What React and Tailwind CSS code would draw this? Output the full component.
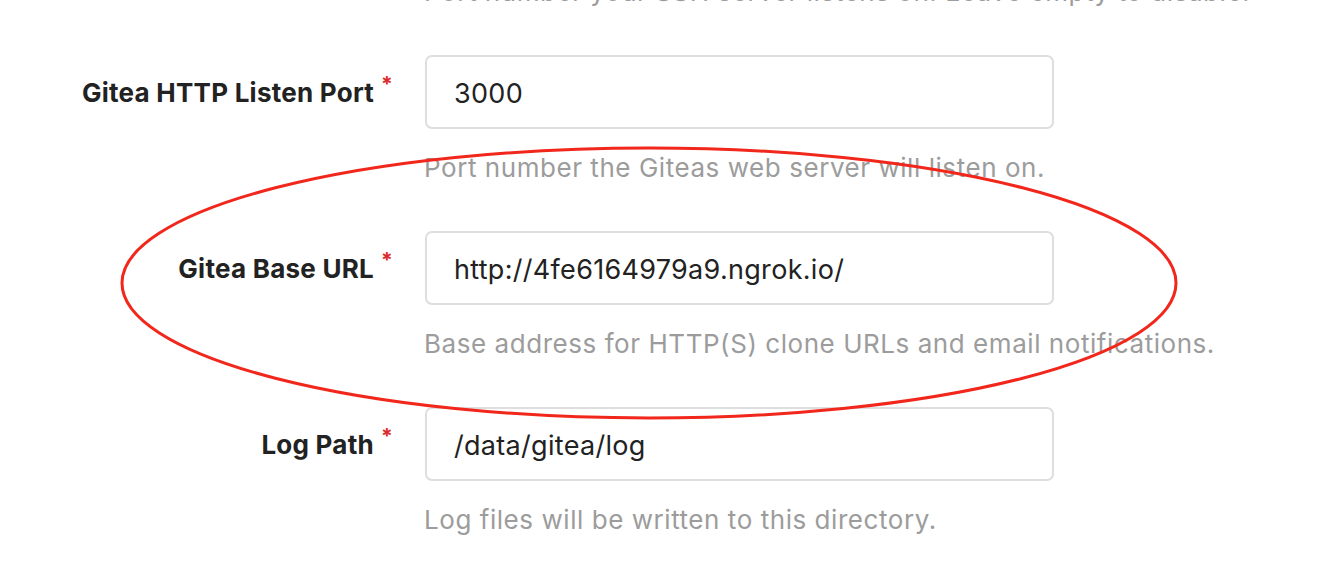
import React from 'react';

const fields = [
  {
    label: 'Gitea HTTP Listen Port',
    value: '3000',
    help: 'Port number the Giteas web server will listen on.',
  },
  {
    label: 'Gitea Base URL',
    value: 'http://4fe6164979a9.ngrok.io/',
    help: 'Base address for HTTP(S) clone URLs and email notifications.',
  },
  {
    label: 'Log Path',
    value: '/data/gitea/log',
    help: 'Log files will be written to this directory.',
  },
];

const Field = ({ label, value, help }) => (
  <div className="mb-[48px]">
    <div className="flex items-center h-[74px]">
      <label className="w-[393px] text-right text-[26px] tracking-[0.25px] font-bold text-[#222222]">
        {label}
        <span className="relative -top-[10px] ml-[7px] text-[21px] text-[#db2828]">*</span>
      </label>
      <input
        type="text"
        defaultValue={value}
        className="ml-[32px] w-[629px] h-[74px] px-[27px] pt-[2px] text-[27px] tracking-[0.3px] text-[#222222] bg-white border-2 border-[#dedede] rounded-[7px] outline-none"
      />
    </div>
    <div className="ml-[424px] mt-[24px] h-[30px] leading-[30px] text-[26px] tracking-[0.55px] text-[#9c9c9c]">
      {help}
    </div>
  </div>
);

const App = () => {
  return (
    <div
      className="relative w-[1328px] h-[564px] overflow-hidden bg-white"
      style={{ fontFamily: 'Inter, "Noto Sans", sans-serif' }}
    >
      <div className="-mt-[23px]">
        <div className="mb-[48px] ml-[424px] h-[30px] leading-[30px] text-[26px] tracking-[0.55px] text-[#9c9c9c]">
          Port number your SSH server listens on. Leave empty to disable.
        </div>
        {fields.map((f) => (
          <Field key={f.label} {...f} />
        ))}
      </div>

      <svg className="absolute inset-0 pointer-events-none" width="1328" height="564">
        <ellipse cx="649" cy="283" rx="527" ry="135" fill="none" stroke="#f2271c" strokeWidth="3" />
      </svg>
    </div>
  );
};

export default App;
